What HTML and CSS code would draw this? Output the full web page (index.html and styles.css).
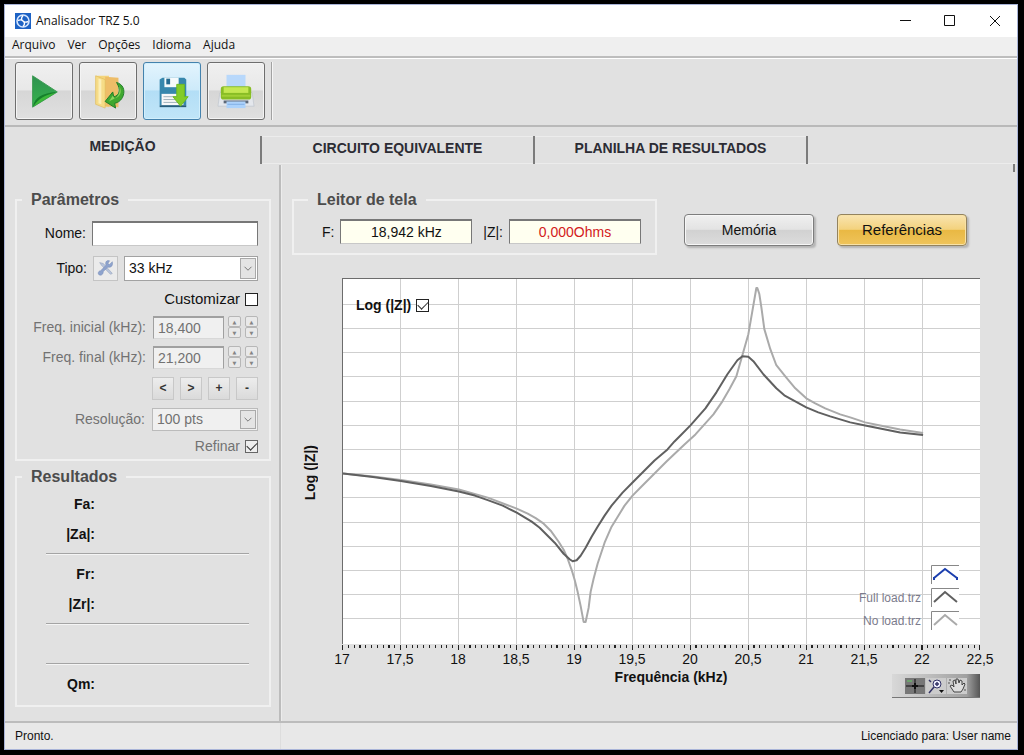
FILE: index.html
```html
<!DOCTYPE html>
<html lang="pt-BR">
<head>
<meta charset="utf-8">
<title>Analisador TRZ 5.0</title>
<link rel="stylesheet" href="styles.css">
</head>
<body>
<div class="window">
  <header class="titlebar">
    <svg class="app-icon" viewBox="0 0 16 16" aria-hidden="true"><rect width="16" height="16" fill="#1d62c4"/><circle cx="8" cy="8" r="6" fill="none" stroke="#d5e6ff" stroke-width="1.6"/><path d="M8 2.500C6 5 6 6.500 8 8s2 3 0 5.500M3 7.500c2-1 3.500-1 5 .5s3 1.500 5 .5" fill="none" stroke="#fff" stroke-width="1.400"/></svg>
    <h1 class="title">Analisador TRZ 5.0</h1>
    <div class="window-buttons">
      <button class="window-button" aria-label="Minimizar"><svg viewBox="0 0 12 12"><path d="M1 5.500h11"/></svg></button>
      <button class="window-button" aria-label="Maximizar"><svg viewBox="0 0 12 12"><path d="M.5.5h10v10H.5z"/></svg></button>
      <button class="window-button" aria-label="Fechar"><svg viewBox="0 0 12 12"><path d="M1 1l10 10M11 1L1 11"/></svg></button>
    </div>
  </header>
  <nav class="menubar">
    <button class="menu">Arquivo</button><button class="menu">Ver</button><button class="menu">Opções</button><button class="menu">Idioma</button><button class="menu">Ajuda</button>
  </nav>
  <div class="toolbar">
    <button class="tool" aria-label="Iniciar"><svg viewBox="0 0 40 40">
      <defs><linearGradient id="play" x1="0" y1="0" x2="0" y2="1"><stop offset="0" stop-color="#2f9150"/><stop offset="1" stop-color="#35b44c"/></linearGradient></defs>
      <path d="M8 4l26 17L8 37z" fill="url(#play)" stroke="#3d9a52"/><path d="M8.500 36C10 27 18 22 33 21z" fill="#15802c"/><path d="M9 36c5-8 12-12 23-14z" fill="#3db83a"/></svg></button>
    <button class="tool" aria-label="Abrir"><svg viewBox="0 0 40 40">
      <path d="M7 4h14v33l-14-3z" fill="#f4d57c"/><path d="M17 5l14 1v31l-14-1z" fill="#eebd68"/><path d="M7 4l10 4v30l-10-4z" fill="#f6dc87" stroke="#dcb756" stroke-width=".6"/><path d="M10 7l3 1v26l-3-1z" fill="#fbeeb8"/>
      <path d="M29 11c7 2 9 8 7 14-2 5-5 7-9 8l1 5-11-7 8-10 1 5c6-1 8-7 3-15z" fill="#3fa82f" stroke="#1c7b28"/><path d="M32 15c3 6 1 11-5 13l-6 3 4-6 2 3c4-2 6-7 5-13z" fill="#8bd45d"/></svg></button>
    <button class="tool tool-active" aria-label="Salvar"><svg viewBox="0 0 40 40">
      <path d="M7 8l3-2h23l2 2v27H7z" fill="#3787ad"/><path d="M12 6h15v10H12z" fill="#f5fafc"/><path d="M14 7h4v6h-4z" fill="#266b91"/><path d="M9 23h23v12H9z" fill="#f8f8f8"/><path d="M11 26h18M11 29h18M11 32h18" stroke="#9baeb8"/><path d="M7 35h28v2H7z" fill="#285d7a"/>
      <path d="M25 13h8v13h4l-8 10-8-10h4z" fill="#82cc29" stroke="#6db823"/></svg></button>
    <button class="tool" aria-label="Imprimir"><svg viewBox="0 0 40 40">
      <path d="M10 3h20v13H10z" fill="#b8d8fb"/><path d="M3 22l3-2h28l3 2 2 14H1z" fill="#e4e7ec" stroke="#b9c0ca" stroke-width=".6"/><path d="M7 30h26v3H7z" fill="#5d6878"/><path d="M10 31h20v7H10z" fill="#acd2fb"/><path d="M11 34h18" stroke="#80afe5"/>
      <rect x="4" y="15" width="32" height="14" rx="3" fill="#88bd25"/><path d="M7 16h26v6H7z" fill="#c4e852"/><path d="M5 24h30v2H5z" fill="#a2d035"/></svg></button>
    <span class="toolbar-end"></span>
  </div>
  <div class="tabs" role="tablist">
    <button class="tab tab-selected" role="tab" aria-selected="true">MEDIÇÃO</button>
    <button class="tab" role="tab" aria-selected="false">CIRCUITO EQUIVALENTE</button>
    <button class="tab" role="tab" aria-selected="false">PLANILHA DE RESULTADOS</button>
    <span class="tabs-rest"></span>
  </div>
  <main class="content">
    <aside class="sidebar">
      <fieldset class="group">
        <legend class="legend">Parâmetros</legend>
        <div class="form">
          <div class="row row-name"><label for="nome">Nome:</label><input class="box" id="nome" type="text"></div>
          <div class="row row-type"><label for="tipo">Tipo:</label>
            <button class="wrench" aria-label="Configurar tipo"><svg viewBox="0 0 20 20"><path d="M3 4l4 1 10 11-2 1L5 7z" fill="#b9c5dc" stroke="#8e9cb9" stroke-width=".6"/><path d="M17 3l-3 3-2-1 2-3c-4-1-5 2-4 5l-6 6c-3 0-4 5 0 5 2 0 3-2 3-4l5-5c4 1 6-2 5-6z" fill="#8ea3cd" stroke="#6d83b0" stroke-width=".5"/></svg></button>
            <span class="picker picker-type"><select class="select" id="tipo"><option>33 kHz</option></select><svg class="arrow" viewBox="0 0 16 20"><path d="M4 8l4 4 4-4"/></svg></span></div>
          <div class="row row-custom"><label for="custom">Customizar</label><input class="check" id="custom" type="checkbox"></div>
          <div class="row row-field dim"><label for="fi">Freq. inicial (kHz):</label><input class="box box-number" id="fi" type="text" value="18,400" disabled>
            <span class="spin"><button disabled aria-label="Aumentar">▲</button><button disabled aria-label="Diminuir">▼</button></span><span class="spin"><button disabled aria-label="Aumentar mais">▲</button><button disabled aria-label="Diminuir mais">▼</button></span></div>
          <div class="row row-field dim"><label for="ff">Freq. final (kHz):</label><input class="box box-number" id="ff" type="text" value="21,200" disabled>
            <span class="spin"><button disabled aria-label="Aumentar">▲</button><button disabled aria-label="Diminuir">▼</button></span><span class="spin"><button disabled aria-label="Aumentar mais">▲</button><button disabled aria-label="Diminuir mais">▼</button></span></div>
          <div class="row row-steps"><button class="step">&lt;</button><button class="step">&gt;</button><button class="step">+</button><button class="step">-</button></div>
          <div class="row row-field dim"><label for="res">Resolução:</label><span class="picker picker-small"><select class="select" id="res" disabled><option>100 pts</option></select><svg class="arrow" viewBox="0 0 16 20"><path d="M4 8l4 4 4-4"/></svg></span></div>
          <div class="row row-refine dim"><label for="ref">Refinar</label><input class="check" id="ref" type="checkbox" checked disabled></div>
        </div>
      </fieldset>
      <fieldset class="group group-results">
        <legend class="legend">Resultados</legend>
        <div class="results">
          <div class="result">Fa:</div><div class="result">|Za|:</div><hr class="rule">
          <div class="result">Fr:</div><div class="result">|Zr|:</div><hr class="rule">
          <div class="result"></div><hr class="rule">
          <div class="result">Qm:</div>
        </div>
      </fieldset>
    </aside>
    <section class="measure">
      <div class="top">
        <fieldset class="group reader">
          <legend class="legend legend-reader">Leitor de tela</legend>
          <div class="readings">
            <label for="f">F:</label><input class="box reading" id="f" type="text" value="18,942 kHz" readonly>
            <label class="z-label" for="z">|Z|:</label><input class="box reading reading-z" id="z" type="text" value="0,000Ohms" readonly>
          </div>
        </fieldset>
        <button class="action">Memória</button>
        <button class="action action-gold">Referências</button>
      </div>
      <div class="chart">
        <div class="y-title"><span>Log (|Z|)</span></div>
        <div class="plot">
          <svg class="curves" viewBox="342 278 638 364" preserveAspectRatio="none" aria-label="Impedância por frequência">
            <path class="grid" d="M400 278v364M458 278v364M516 278v364M574 278v364M632 278v364M690 278v364M748 278v364M806 278v364M864 278v364M922 278v364M342 303h638M342 327h638M342 351h638M342 375h638M342 400h638M342 424h638M342 448h638M342 472h638M342 496h638M342 521h638M342 545h638M342 569h638M342 593h638M342 617h638"/>
            <polyline class="curve curve-none" points="342,472 372,475 400,478.500 430,483 458,488 487,496 516,507 527,512 535,516.500 543,522 550,529 558,540 563,548 567,557 571,568 574,578 577,590 580,604 583,620 585,620 588,606 590,590 593,577 597,562 604,541 611,525 624,504 632,494 640,486 654,472 666,460 684,443 695,433 704,423 713,413 722,400 729,388 736,375 742,354 748,333 752,310 756,287 757,287 759,293 761,306 764,328 770,348 776,364 785,375 795,387 806,397 815,402 825,407 840,413 850,416 865,421 880,424 900,428 923,431.500"/>
            <polyline class="curve curve-full" points="342,472 372,475.500 400,479.500 430,484.500 458,490 474,494 487,498.500 502,504 516,511 531,520 539,526 546,533 554,541 563,552 569,557.500 572,559.500 576,558.500 580,554 585,546 591,535 597,525 604,514 611,504 622,491 632,481 640,473 654,459 667,448 674,440 680,434 690,424 705,407 716,391 727,373 737,359 742,355 748,355.500 753,360 763,373 776,387 784,394 795,400 806,406 818,411 830,415 850,421 865,424 880,427 900,431 923,433.500"/>
          </svg>
          <div class="log"><label for="log">Log (|Z|)</label><input class="check" id="log" type="checkbox" checked></div>
          <div class="keys">
            <span></span><svg class="key" viewBox="0 0 28 19"><path class="key-frame" d="M0.500 19V.5H28"/><path d="M3 12v3M26 12v3M3 13l11-9 12 9" stroke="#1c3fae"/></svg>
            <span>Full load.trz</span><svg class="key" viewBox="0 0 28 19"><path class="key-frame" d="M0.500 19V.5H28"/><path d="M3 14l11-10 12 10" stroke="#606060"/></svg>
            <span>No load.trz</span><svg class="key" viewBox="0 0 28 19"><path class="key-frame" d="M0.500 19V.5H28"/><path d="M3 14l11-10 12 10" stroke="#aaa"/></svg>
          </div>
        </div>
        <div class="axis">
          <svg class="ticks" viewBox="0 0 1101 6" preserveAspectRatio="none" aria-hidden="true"><path d="M0 2h1101" stroke-width="4" stroke-dasharray="2 8"/><path d="M0 3h1101" stroke-width="6" stroke-dasharray="2 98"/></svg>
          <div class="scale"><span>17</span><span>17,5</span><span>18</span><span>18,5</span><span>19</span><span>19,5</span><span>20</span><span>20,5</span><span>21</span><span>21,5</span><span>22</span><span>22,5</span></div>
          <div class="under">
            <span class="x-title">Frequência (kHz)</span>
            <div class="palette">
              <button class="palette-tool palette-on" aria-label="Cursor"><svg viewBox="0 0 20 16"><path d="M1 8h18M10 1v14" stroke="#111"/><path d="M7 8h6M10 5v6" stroke="#111" stroke-width="2"/><path d="M2 3h5" stroke="#6c6"/></svg></button>
              <button class="palette-tool" aria-label="Zoom"><svg viewBox="0 0 20 16"><circle cx="11" cy="6" r="4" fill="#eef" stroke="#336"/><path d="M8 9l-5 6M11 4v4M9 6h4M3 2l2 2" stroke="#336" stroke-width="1.500"/><path d="M13 12h5l-2.500 3z" fill="#111"/></svg></button>
              <button class="palette-tool" aria-label="Mover"><svg viewBox="0 0 20 16"><path d="M7 14L3 8l2-1 2 2-1-6 2-1 1 4V1h2l1 4 1-3 2 1v4l2-2 1 1-2 5-2 3z" fill="#ddd" stroke="#444"/><path d="M2 2h2M1 5h2M17 12h2" stroke="#555"/></svg></button>
            </div>
          </div>
        </div>
      </div>
    </section>
  </main>
  <footer class="status"><span class="status-left">Pronto.</span><span>Licenciado para: User name</span></footer>
</div>
</body>
</html>
```
FILE: styles.css
```css
* { box-sizing: border-box; }
body {
  margin: 0;
  padding: 4px 6px 5px 4px;
  min-height: 100vh;
  display: flex;
  background: #000;
  color: #111;
  font: 14px/18px "Liberation Sans", Arial, sans-serif;
}
button, input, select { font: inherit; color: inherit; margin: 0; }
button { padding: 0; }
svg { display: block; }

.window {
  flex: 1;
  display: flex;
  flex-direction: column;
  background: #e1e1e1;
  border: 1px solid #a9b4d8;
}

/* Title and menu */
.titlebar {
  display: flex;
  align-items: center;
  height: 32px;
  padding-left: 10px;
  background: #fff;
  font: 12px/16px "Open Sans", "Noto Sans", sans-serif;
}
.app-icon { width: 16px; height: 16px; margin-right: 5px; }
.title { flex: 1; margin: 0; font-size: 12px; font-weight: 400; }
.window-buttons { display: flex; }
.window-button {
  width: 45px;
  height: 30px;
  display: grid;
  place-items: center;
  border: 0;
  background: none;
}
.window-button svg { width: 12px; height: 12px; fill: none; stroke: #111; }
.menubar {
  display: flex;
  align-items: flex-start;
  gap: 12px;
  height: 19px;
  padding-left: 7px;
  background: #efefef;
  font: 12px/16px "Open Sans", "Noto Sans", sans-serif;
}
.menu { border: 0; background: none; }

/* Toolbar */
.toolbar {
  display: flex;
  gap: 6px;
  padding: 4px 10px 5px;
  border-top: 2px solid #bdbdbd;
  border-bottom: 2px solid #b9b9b9;
  box-shadow: inset 0 1px #fff;
}
.tool {
  width: 58px;
  height: 58px;
  display: grid;
  place-items: center;
  border: 1px solid #6e6e6e;
  border-radius: 3px;
  background: linear-gradient(#f0f0f0, #e8e8e8 48%, #d6d6d6 50%, #e0e0e0);
  box-shadow: inset 0 0 0 1px #f4f4f4;
}
.tool svg { width: 38px; height: 38px; }
.tool-active {
  border-color: #4482ad;
  background: linear-gradient(#e3f4fd, #cdeafa 48%, #b3def6 50%, #c0e5f8);
  box-shadow: inset 0 0 0 1px #d2effc;
}
.toolbar-end { width: 2px; border-left: 1px solid #a2a2a2; border-right: 1px solid #f5f5f5; }

/* Tabs */
.tabs {
  display: flex;
  height: 38px;
  padding-top: 9px;
  font-weight: 700;
  color: #2c2c34;
}
.tab {
  width: 273px;
  height: 28px;
  padding-bottom: 4px;
  border: 0;
  border-right: 2px solid #7b7b7b;
  background: none;
  box-shadow: inset 0 1px #ececec, inset 0 -1px #ececec;
}
.tab-selected { width: 257px; padding: 0 20px 8px 0; box-shadow: none; }
.tabs-rest { position: relative; flex: 1; height: 28px; box-shadow: inset 0 -1px #ececec; }
.tabs-rest::after {
  content: "";
  position: absolute;
  right: 2px;
  top: 100%;
  width: 2px;
  height: 8px;
  background: #7b7b7b;
}

/* Content */
.content { flex: 1; display: flex; }
.sidebar {
  width: 276px;
  padding: 26px 8px 12px 10px;
  border-right: 2px solid #bcbcbc;
}
.group { min-width: 0; margin: 0; padding: 0; border: 2px solid #f0f0f0; }
.group-results { margin-top: 7px; }
.legend {
  margin-left: 5px;
  padding: 0 9px;
  color: #4c4c4c;
  font-size: 16px;
  line-height: 18px;
  font-weight: 700;
}
.form { display: flex; flex-direction: column; gap: 8px; padding: 11px 11px 5px 0; }
.row { display: flex; align-items: center; justify-content: flex-end; gap: 6px; }
.row-name { height: 26px; }
.row-type { height: 28px; }
.row-custom { height: 18px; gap: 5px; font-size: 15px; }
.row-field { height: 22px; gap: 4px; }
.row-field label { margin-right: 3px; }
.row-steps { height: 24px; }
.row-refine { height: 16px; gap: 5px; }
.dim { color: #727272; }
.box {
  width: 166px;
  height: 25px;
  padding: 0 4px;
  border: 1px solid #777;
  border-top-width: 2px;
  border-bottom-color: #c8c8c8;
  border-radius: 0;
  background: #fff;
  outline: 0;
}
.box-number { width: 71px; height: 23px; background: #f0f0f0; border-color: #a0a0a0 #a0a0a0 #d8d8d8; }
.wrench {
  width: 25px;
  height: 25px;
  display: grid;
  place-items: center;
  border: 1px solid #c4c4c4;
  background: #ebebeb;
}
.wrench svg { width: 18px; height: 18px; }
.picker { position: relative; height: 25px; }
.picker-type { width: 134px; }
.picker-small { width: 106px; height: 23px; }
.select {
  width: 100%;
  height: 100%;
  padding: 0 20px 0 4px;
  appearance: none;
  border: 1px solid #a2a2a2;
  border-radius: 0;
  background: #fff;
}
.select:disabled { opacity: 1; background: #f0f0f0; border-color: #bbb; }
.arrow {
  position: absolute;
  top: 2px;
  right: 2px;
  bottom: 2px;
  width: 16px;
  height: calc(100% - 4px);
  border: 1px solid #a9a9a9;
  background: #e4e4e4;
  fill: none;
  stroke: #666;
  pointer-events: none;
}
.check {
  width: 13px;
  height: 13px;
  display: grid;
  place-items: center;
  appearance: none;
  border: 1px solid #222;
  background: #fff;
}
.check:checked::after {
  content: "";
  width: 9px;
  height: 5px;
  margin-bottom: 3px;
  border: solid #333;
  border-width: 0 0 1px 1px;
  transform: rotate(-45deg);
}
.check:disabled { border-color: #666; background: #eee; }
.spin { display: flex; flex-direction: column; width: 13px; height: 22px; }
.spin button {
  flex: 1;
  border: 1px solid #b7b7b7;
  border-radius: 2px;
  background: #e9e9e9;
  color: #858585;
  font: 5px/8px "DejaVu Sans", sans-serif;
}
.row-steps .step {
  width: 22px;
  height: 23px;
  border: 1px solid #c8c8c8;
  background: linear-gradient(#ededed, #dadada);
  color: #333;
  font-size: 12px;
  font-weight: 700;
}
.results { padding: 3px 20px 6px 29px; }
.result { width: 49px; height: 30px; line-height: 30px; font-weight: 700; text-align: right; white-space: nowrap; }
.rule { height: 2px; margin: 4px 0; border: 0; border-top: 1px solid #a4a4a4; border-bottom: 1px solid #f5f5f5; }

/* Measurement */
.measure {
  flex: 1;
  min-width: 0;
  display: flex;
  flex-direction: column;
  padding: 26px 37px 23px 10px;
  border-left: 1px solid #ececec;
}
.top { display: flex; align-items: center; height: 64px; }
.reader { width: 365px; margin-right: auto; }
.legend-reader { margin-left: 14px; }
.readings { display: flex; align-items: center; padding: 10px 14px 9px 28px; }
.readings label { margin-right: 6px; }
.readings .z-label { margin-left: auto; }
.reading { width: 132px; background: #fffff0; text-align: center; }
.reading-z { color: #d32020; }
.action {
  width: 130px;
  height: 32px;
  margin-right: 23px;
  margin-top: 14px;
  border: 1px solid #7d7d7d;
  border-radius: 4px;
  background: linear-gradient(#f0f0f0, #e3e3e3 48%, #d1d1d1 50%, #dcdcdc);
  box-shadow: inset 0 0 0 1px #f7f7f7, 2px 2px 2px #b4b4b4;
}
.action-gold {
  margin-right: 13px;
  border-color: #93835e;
  background: linear-gradient(#f9e4b0, #f3d27d 48%, #e9b843 50%, #efc45b);
  box-shadow: inset 0 0 0 1px #f8e2a7, 2px 2px 2px #b4b4b4;
  font-size: 15px;
}
.chart {
  flex: 1;
  display: grid;
  grid-template-columns: 50px minmax(0, 1fr);
  grid-template-rows: 1fr auto;
  margin-top: 23px;
}
.y-title { display: flex; align-items: center; justify-content: center; padding: 24px 14px 0 0; font-weight: 700; }
.y-title span { writing-mode: vertical-rl; transform: rotate(180deg); }
.plot {
  position: relative;
  min-height: 200px;
  background: #fff;
  border-top: 1px solid #6c6c6c;
  border-left: 1px solid #6c6c6c;
}
.curves { position: absolute; inset: 0; width: 100%; height: 100%; }
.grid { fill: none; stroke: #cfcfcf; stroke-width: 1; vector-effect: non-scaling-stroke; shape-rendering: crispEdges; }
.curve { fill: none; stroke-width: 2; vector-effect: non-scaling-stroke; stroke-linejoin: round; }
.curve-full { stroke: #606060; }
.curve-none { stroke: #aaa; }
.log { position: absolute; top: 17px; left: 13px; display: flex; align-items: center; gap: 5px; font-weight: 700; }
.keys {
  position: absolute;
  right: 21px;
  bottom: 14px;
  display: grid;
  grid-template-columns: auto 28px;
  gap: 4px 10px;
  align-items: center;
  color: #7b7b8c;
  font-size: 12px;
  text-align: right;
}
.key { width: 28px; height: 19px; background: #fff; fill: none; stroke-width: 2; }
.key-frame { stroke: #888; stroke-width: 1; }
.axis { grid-column: 2; padding-top: 1px; }
.ticks { width: 100%; height: 5px; fill: none; stroke: #222; shape-rendering: crispEdges; }
.scale { display: flex; justify-content: space-between; height: 18px; }
.scale span { width: 0; display: flex; justify-content: center; }
.under { display: grid; grid-template-columns: 1fr auto 1fr; height: 30px; }
.x-title { grid-column: 2; padding-left: 20px; font-weight: 700; }
.palette {
  justify-self: end;
  display: flex;
  align-items: center;
  gap: 1px;
  width: 88px;
  height: 24px;
  margin-top: 6px;
  padding-left: 13px;
  background: linear-gradient(90deg, #d8d8d8, #b8b8b8 50%, #a0a0a0 85%, #555);
  border-bottom: 1px solid #777;
}
.palette-tool { width: 20px; height: 16px; border: 0; background: #ccc; }
.palette-tool svg { width: 20px; height: 16px; fill: none; }
.palette-on { background: #777; }

/* Status bar */
.status {
  display: flex;
  align-items: center;
  justify-content: space-between;
  height: 28px;
  padding: 0 6px 0 10px;
  background: #e8e8e8;
  border-top: 2px solid #bcbcbc;
  font-size: 12px;
}
.status-left { width: 266px; line-height: 26px; border-right: 1px solid #ddd; }
```
